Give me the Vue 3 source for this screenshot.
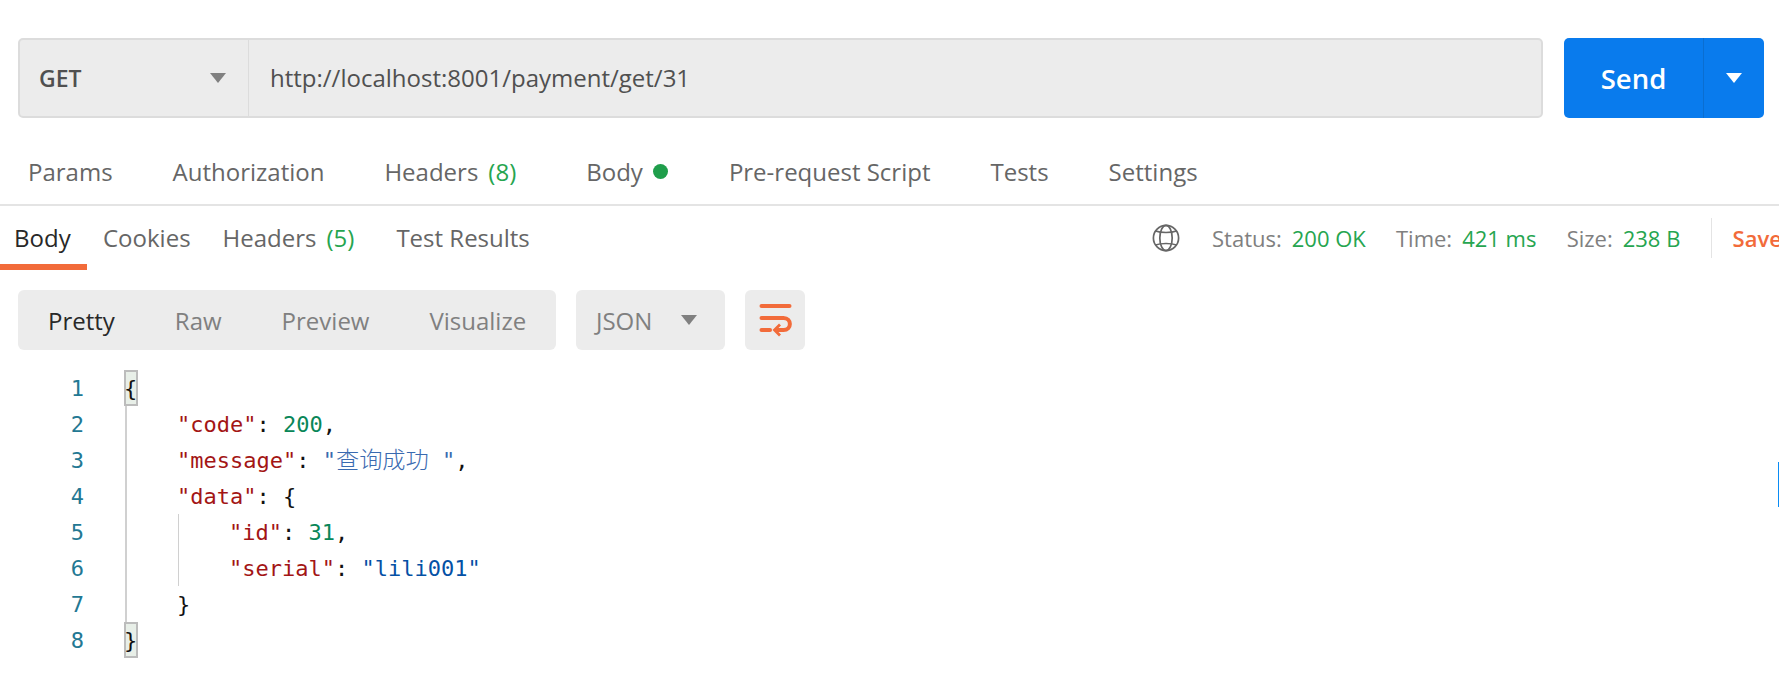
<script setup>
const tabs = [
  { label: 'Params', x: 0 },
  { label: 'Authorization' },
  { label: 'Headers', count: '(8)', wide: true },
  { label: 'Body', dot: true },
  { label: 'Pre-request Script' },
  { label: 'Tests' },
  { label: 'Settings' },
]
const views = ['Pretty', 'Raw', 'Preview', 'Visualize']
const stats = [
  { k: 'Status:', v: '200 OK' },
  { k: 'Time:', v: '421 ms' },
  { k: 'Size:', v: '238 B' },
]
const nums = [1, 2, 3, 4, 5, 6, 7, 8]
</script>

<template>
  <div class="page">
    <div class="url-row">
      <div class="url-box">
        <div class="method"><span>GET</span><i class="caret"></i></div>
        <div class="url">http://localhost:8001/payment/get/31</div>
      </div>
      <div class="send">
        <div class="send-label">Send</div>
        <div class="send-more"><i class="caret white"></i></div>
      </div>
    </div>

    <div class="req-tabs">
      <div v-for="t in tabs" :key="t.label" class="req-tab" :class="{ wide: t.wide }">
        {{ t.label }}<span v-if="t.count" class="count">{{ t.count }}</span><i v-if="t.dot" class="dot"></i>
      </div>
    </div>

    <div class="res-row">
      <div class="res-tab active">Body</div>
      <div class="res-tab">Cookies</div>
      <div class="res-tab">Headers<span class="count small">(5)</span></div>
      <div class="res-tab last">Test Results</div>
      <div class="res-right">
        <svg class="globe" width="28" height="28" viewBox="0 0 28 28" fill="none" stroke="#666" stroke-width="1.7">
          <circle cx="14" cy="14" r="12.6" />
          <ellipse cx="14" cy="14" rx="6.200" ry="12.6" />
          <path d="M3.500 7C9 9 19 9 24.500 7M3.500 21C9 19 19 19 24.500 21" />
        </svg>
        <div v-for="s in stats" :key="s.k" class="stat"><span class="k">{{ s.k }}</span><span class="v">{{ s.v }}</span></div>
        <i class="sep"></i>
        <span class="save">Save Response</span>
      </div>
    </div>

    <div class="bar">
      <div class="views">
        <div v-for="(v, i) in views" :key="v" class="view" :class="{ on: i === 0 }">{{ v }}</div>
      </div>
      <div class="lang"><span>JSON</span><i class="caret"></i></div>
      <div class="wrap">
        <svg width="33" height="34" viewBox="0 0 33 34" fill="none" stroke="#f26b3a" stroke-width="4" stroke-linecap="round">
          <path d="M2.500 3H30.500" />
          <path d="M2.500 15H24.500C33 15 33 27 24.500 27H19" />
          <path d="M2.500 27H11" />
          <path d="M21 21.500L15.500 27L21 32.500" stroke-width="2.800" stroke-linecap="butt" />
        </svg>
      </div>
    </div>

    <div class="code">
      <div class="gutter"><div v-for="n in nums" :key="n" class="num">{{ n }}</div></div>
      <div class="lines">
        <i class="guide g1"></i>
        <i class="guide g2"></i>
        <div class="line"><span class="match">{</span></div>
        <div class="line in1"><span class="key">"code"</span>: <span class="n">200</span>,</div>
        <div class="line in1"><span class="key">"message"</span>: <span class="s">"<span class="cjk">查询成功</span> "</span>,</div>
        <div class="line in1"><span class="key">"data"</span>: {</div>
        <div class="line in2"><span class="key">"id"</span>: <span class="n">31</span>,</div>
        <div class="line in2"><span class="key">"serial"</span>: <span class="s dark">"lili001"</span></div>
        <div class="line in1">}</div>
        <div class="line"><span class="match">}</span></div>
      </div>
    </div>

    <i class="edge"></i>
  </div>
</template>

<style>
html, body { margin: 0; background: #fff; overflow: hidden; }
</style>

<style scoped>
.page {
  position: relative;
  width: 1779px;
  height: 678px;
  overflow: hidden;
  background: #fff;
  font-family: "Open Sans", "Noto Sans", sans-serif;
  font-size: 24px;
  color: #666;
  box-sizing: border-box;
  padding-top: 38px;
}
.caret {
  display: inline-block;
  width: 0;
  height: 0;
  border-left: 8px solid transparent;
  border-right: 8px solid transparent;
  border-top: 10px solid #808080;
}
.caret.white { border-top-color: #fff; }

.url-row { display: flex; height: 80px; padding: 0 15px 0 18px; gap: 21px; }
.url-box {
  flex: 1;
  display: flex;
  background: #ececec;
  border: 2px solid #dcdcdc;
  border-radius: 5px;
  box-sizing: border-box;
}
.method {
  width: 229px;
  flex: none;
  box-sizing: border-box;
  border-right: 1px solid #dcdcdc;
  display: flex;
  align-items: center;
  justify-content: space-between;
  padding: 0 22px 0 19px;
  font-size: 23px;
  font-weight: 600;
  color: #505050;
}
.url { padding-left: 21px; display: flex; align-items: center; color: #505050; padding-bottom: 2px; }
.send {
  width: 200px;
  display: flex;
  background: #097bed;
  border-radius: 5px;
  color: #fff;
}
.send-label {
  width: 139px;
  display: flex;
  align-items: center;
  justify-content: center;
  font-size: 27.500px;
  font-weight: 600;
  border-right: 1px solid #0a6ed1;
}
.send-more { flex: 1; display: flex; align-items: center; justify-content: center; }

.req-tabs {
  display: flex;
  height: 58px;
  margin-top: 28px;
  padding-left: 28px;
  gap: 60px;
  border-bottom: 2px solid #e4e4e4;
  align-items: flex-start;
}
.req-tab { height: 50px; display: flex; align-items: center; white-space: pre; }
.req-tab.wide { margin-right: 10px; }
.count { color: #26a550; margin-left: 10px; }
.count.small { margin-left: 10px; }
.dot { width: 15px; height: 15px; border-radius: 50%; background: #1f9e4b; margin: 0 1px 0 10px; }

.res-row { display: flex; height: 64px; align-items: stretch; }
.res-tab {
  box-sizing: border-box;
  padding: 4px 0 0;
  margin-left: 32px;
  display: flex;
  align-items: center;
  border-bottom: 6px solid transparent;
}
.res-tab.active {
  margin-left: 0;
  padding: 4px 16px 0 14px;
  color: #282828;
  border-bottom-color: #f26b3a;
  width: 87px;
}
.res-tab:nth-child(2) { margin-left: 16px; }
.res-tab.last { margin-left: 42px; }
.res-right {
  position: absolute;
  left: 1152px;
  top: 206px;
  height: 64px;
  display: flex;
  align-items: center;
  white-space: nowrap;
  font-size: 22px;
}
.globe { margin-right: 32px; }
.stat { margin-right: 30.200px; }
.k { color: #808080; margin-right: 10px; }
.v { color: #26a550; }
.sep { width: 1px; height: 40px; background: #e4e4e4; margin-right: 21px; }
.save { color: #f26b3a; font-weight: 600; }

.bar { display: flex; height: 60px; margin-top: 20px; padding-left: 18px; gap: 20px; }
.views {
  width: 538px;
  background: #ececec;
  border-radius: 6px;
  display: flex;
  align-items: center;
  padding-left: 30px;
  gap: 60px;
  box-sizing: border-box;
  color: #808080;
}
.view.on { color: #282828; }
.lang {
  width: 149px;
  background: #ececec;
  border-radius: 6px;
  box-sizing: border-box;
  padding: 0 28px 0 20px;
  display: flex;
  align-items: center;
  justify-content: space-between;
  color: #808080;
}
.wrap {
  width: 60px;
  background: #ececec;
  border-radius: 6px;
  display: flex;
  align-items: center;
  justify-content: center;
}

.code {
  display: flex;
  margin-top: 20px;
  font-family: "DejaVu Sans Mono", "Liberation Mono", monospace;
  font-size: 22px;
  color: #111;
}
.gutter { width: 126px; box-sizing: border-box; padding-right: 42px; text-align: right; color: #237893; }
.num, .line { height: 36px; line-height: 38px; white-space: pre; }
.lines { position: relative; flex: 1; }
.in1 { padding-left: 51px; }
.in2 { padding-left: 103px; }
.key { color: #a31515; }
.n { color: #098658; }
.s { color: #3a6ab0; }
.s.dark { color: #0451a5; }
.cjk { font-family: "Noto Sans CJK SC", sans-serif; font-size: 23.200px; font-weight: 300; line-height: 1; vertical-align: baseline; }
.match {
  display: inline-block;
  vertical-align: top;
  width: 14px;
  height: 36px;
  box-sizing: border-box;
  margin-left: -2px;
  background: #e8efe8;
  border: 2px solid #bcbcbc;
  line-height: 33px;
  text-indent: -2px;
  position: relative;
  z-index: 1;
}
.guide { position: absolute; width: 2px; background: #d0d0d0; }
.g1 { left: -1px; top: 0; height: 288px; }
.g2 { left: 52px; top: 144px; height: 72px; width: 1px; }
.edge { position: absolute; left: 1778px; top: 462px; width: 1px; height: 45px; background: #0a8cf5; }
</style>
